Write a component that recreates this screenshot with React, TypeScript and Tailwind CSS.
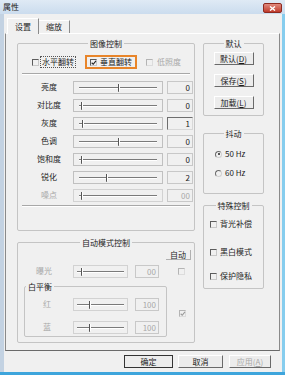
import type { ReactNode } from 'react'

const FONT = "font-['Noto_Sans_CJK_SC','Liberation_Sans',sans-serif]"

function Check({ checked, disabled }: { checked?: boolean; disabled?: boolean }) {
  return (
    <span
      className={`relative inline-block w-[7px] h-[7px] shrink-0 border-t border-l border-b border-r ${
        disabled
          ? 'border-t-[#b4b4b4] border-l-[#b4b4b4] border-b-[#dcdcdc] border-r-[#dcdcdc]'
          : 'border-t-[#5c5c5c] border-l-[#5c5c5c] border-b-[#c8c8c8] border-r-[#c8c8c8]'
      }`}
    >
      {checked && (
        <svg viewBox="0 0 7 7" className="absolute left-0 top-0 w-[6px] h-[6px]">
          <path d="M0.8 3.2 L2.6 5 L5.8 1" fill="none" stroke={disabled ? '#9a9a9a' : '#222'} strokeWidth="1.3" />
        </svg>
      )}
    </span>
  )
}

function Radio({ checked }: { checked?: boolean }) {
  return (
    <span className="relative inline-block w-[7px] h-[7px] shrink-0 rounded-full border border-t-[#6a6a6a] border-l-[#6a6a6a] border-b-[#d0d0d0] border-r-[#d0d0d0]">
      {checked && <span className="absolute left-[1.5px] top-[1.5px] w-[2px] h-[2px] rounded-full bg-[#222]" />}
    </span>
  )
}

// 滑块：凹陷框 + 中线 + 小游标
function Slider({ pos, wide, disabled }: { pos: number; wide?: boolean; disabled?: boolean }) {
  return (
    <div className={`relative h-[13px] shrink-0 border ${disabled ? 'border-[#d2d2d2]' : 'border-[#c0c0c0]'} ${wide ? 'w-[90px]' : 'w-[55px]'}`}>
      <div className={`absolute top-[5px] h-[2px] border-t border-[#7a7a7a] border-b border-b-white ${wide ? 'left-[5px] right-[5px]' : 'left-[3px] right-[3px]'}`} />
      <div className="absolute top-[2px] w-[2px] h-[7px] border-l border-[#555] border-r border-r-white" style={{ left: pos }} />
      <div className="absolute top-[9px] w-[1px] h-[1px] bg-[#777]" style={{ left: pos }} />
    </div>
  )
}

function Value({ v, narrow, disabled, focus }: { v: string; narrow?: boolean; disabled?: boolean; focus?: boolean }) {
  return (
    <div
      className={`h-[13px] shrink-0 border text-right pr-[2px] text-[8px] leading-[11px] ${
        focus ? 'border-t-[#6e6e6e] border-l-[#6e6e6e] border-b-[#d8d8d8] border-r-[#d8d8d8]' : 'border-[#c8c8c8]'
      } ${disabled ? 'text-[#a8a8a8]' : 'text-[#222]'} ${narrow ? 'w-[24px]' : 'w-[26px]'}`}
    >
      {v}
    </div>
  )
}

const ROWS = [
  { label: '亮度', pos: 44, v: '0' },
  { label: '对比度', pos: 7, v: '0' },
  { label: '灰度', pos: 8, v: '1', focus: true },
  { label: '色调', pos: 44, v: '0' },
  { label: '饱和度', pos: 7, v: '0' },
  { label: '锐化', pos: 32, v: '2' },
  { label: '噪点', pos: 7, v: '00', disabled: true },
]

// 分组框：标题压在上边框上
function Group({ title, className, children, left }: { title: string; className: string; children: ReactNode; left?: boolean }) {
  return (
    <div className={`relative shrink-0 border border-[#c4c4c4] rounded-[2px] ${className}`}>
      <span
        className={`absolute -top-[6px] px-[2px] bg-[#f0f0f0] text-[8px] leading-[11px] whitespace-nowrap text-[#222] ${
          left ? 'left-[1px]' : 'left-1/2 -translate-x-1/2'
        }`}
      >
        {title}
      </span>
      {children}
    </div>
  )
}

function Btn({ children, className, disabled, dflt }: { children: ReactNode; className: string; disabled?: boolean; dflt?: boolean }) {
  return (
    <div
      className={`shrink-0 flex items-center justify-center text-[8px] leading-none whitespace-nowrap bg-[#ececec] border ${
        dflt ? 'border-[#333]' : 'border-t-white border-l-white border-b-[#6a6a6a] border-r-[#6a6a6a]'
      } ${disabled ? 'text-[#a8a8a8]' : 'text-[#1a1a1a]'} ${className}`}
    >
      {children}
    </div>
  )
}

export default function App() {
  return (
    <div className={`w-[285px] h-[375px] flex flex-col bg-[#c8d8e9] ${FONT} text-[#1e1e1e] whitespace-nowrap`}>
      {/* 标题栏 */}
      <div className="h-[14px] shrink-0 flex items-center justify-between pl-[3px] pr-[3px] bg-gradient-to-b from-[#dfeaf5] to-[#cbdcee]">
        <span className="text-[8px] leading-none text-[#1a1a1a]">属性</span>
        <div className="w-[19px] h-[10px] mt-[2px] rounded-[2px] bg-gradient-to-b from-[#e08a7e] to-[#c0392b] border border-[#8e2a20] flex items-center justify-center">
          <svg viewBox="0 0 8 6" className="w-[7px] h-[5px]">
            <path d="M1 0.5 L7 5.5 M7 0.5 L1 5.5" stroke="#fff" strokeWidth="1.6" />
          </svg>
        </div>
      </div>

      <div className="h-[358px] shrink-0 flex">
        <div className="w-[4px] bg-[#c3d2e2]" />
        <div className="w-[278px] bg-[#f0f0f0] flex flex-col pl-[1px] pr-[2px]">
          {/* 选项卡 */}
          <div className="shrink-0 flex items-end h-[19px] pl-[2px]">
            <div className="h-[16px] w-[32px] flex items-center justify-center border-t border-l border-r border-t-white border-l-white border-r-[#8a8a8a] text-[8px] bg-[#f0f0f0] relative top-[1px]">设置</div>
            <div className="h-[13px] w-[31px] flex items-center justify-center border-t border-r border-t-white border-r-[#8a8a8a] text-[8px]">缩放</div>
          </div>

          {/* 面板 */}
          <div className="h-[318px] shrink-0 border border-t-white border-l-[#8a8a8a] border-r-[#8a8a8a] border-b-[#6a6a6a] flex pt-[9px] pl-[11px] pr-[14px]">
            {/* 左列 */}
            <div className="w-[178px] shrink-0 flex flex-col">
              <Group title="图像控制" className="h-[188px]">
                <div className="mt-[11px] h-[14px] flex items-center text-[8px]">
                  <span className="ml-[14px] flex"><Check /></span>
                  <span className="ml-[1px] px-[1px] leading-[10px] border border-dotted border-[#555]">水平翻转</span>
                  <div className="ml-[9px] h-[14px] w-[52px] border-2 border-[#e8852a] flex items-center">
                    <span className="ml-[3px] flex"><Check checked /></span>
                    <span className="ml-[3px]">垂直翻转</span>
                  </div>
                  <span className="ml-[9px] flex"><Check disabled /></span>
                  <span className="ml-[4px] text-[#a8a8a8]">低照度</span>
                </div>
                <div className="mt-[4px] mx-[4px] h-[2px] border-t border-[#a8a8a8] border-b border-b-white" />
                <div className="mt-[3px] flex flex-col">
                  {ROWS.map((r) => (
                    <div key={r.label} className="h-[18px] flex items-center text-[8px]">
                      <span className={`ml-[12px] w-[38px] text-center ${r.disabled ? 'text-[#a8a8a8]' : ''}`}>{r.label}</span>
                      <span className="ml-[5px]"><Slider wide pos={r.pos} disabled={r.disabled} /></span>
                      <span className="ml-[4px]"><Value v={r.v} disabled={r.disabled} focus={r.focus} /></span>
                    </div>
                  ))}
                </div>
                <div className="mt-[1px] mx-[4px] h-[2px] border-t border-[#a8a8a8] border-b border-b-white" />
              </Group>

              <Group title="自动模式控制" className="mt-[11px] h-[101px]">
                <div className="mt-[7px] h-[10px] flex justify-end pr-[3px]">
                  <div className="w-[25px] h-[10px] border-r border-b border-r-[#b0b0b0] border-b-[#b0b0b0] text-[8px] leading-[10px] text-center">自动</div>
                </div>
                <div className="mt-[4px] h-[14px] flex items-center text-[8px]">
                  <span className="ml-[12px] w-[28px] text-center text-[#a8a8a8]">曝光</span>
                  <span className="ml-[15px]"><Slider pos={7} disabled /></span>
                  <span className="ml-[7px]"><Value v="00" narrow disabled /></span>
                  <span className="ml-[19px] flex"><Check disabled /></span>
                </div>
                <div className="mt-[8px] flex">
                  <Group title="白平衡" left className="ml-[6px] w-[143px] h-[51px]">
                    <div className="mt-[10px] h-[14px] flex items-center text-[8px]">
                      <span className="ml-[12px] w-[20px] text-center text-[#a8a8a8]">红</span>
                      <span className="ml-[16px]"><Slider pos={15} disabled /></span>
                      <span className="ml-[7px]"><Value v="100" narrow disabled /></span>
                    </div>
                    <div className="mt-[9px] h-[14px] flex items-center text-[8px]">
                      <span className="ml-[12px] w-[20px] text-center text-[#a8a8a8]">蓝</span>
                      <span className="ml-[16px]"><Slider pos={15} disabled /></span>
                      <span className="ml-[7px]"><Value v="100" narrow disabled /></span>
                    </div>
                  </Group>
                  <div className="flex-1 flex items-center pl-[12px] pt-[4px]">
                    <Check checked disabled />
                  </div>
                </div>
              </Group>
            </div>

            {/* 右列 */}
            <div className="ml-[8px] w-[61px] shrink-0 flex flex-col">
              <Group title="默认" className="h-[73px]">
                <div className="flex flex-col items-center">
                  <Btn className="mt-[8px] w-[40px] h-[13px]">默认(<u>D</u>)</Btn>
                  <Btn className="mt-[9px] w-[40px] h-[13px]">保存(<u>S</u>)</Btn>
                  <Btn className="mt-[9px] w-[40px] h-[13px]">加载(<u>L</u>)</Btn>
                </div>
              </Group>
              <Group title="抖动" className="mt-[17px] h-[61px]">
                <div className="mt-[15px] h-[10px] flex items-center text-[8px]">
                  <span className="ml-[11px] flex"><Radio checked /></span>
                  <span className="ml-[3px]">50 Hz</span>
                </div>
                <div className="mt-[9px] h-[10px] flex items-center text-[8px]">
                  <span className="ml-[11px] flex"><Radio /></span>
                  <span className="ml-[3px]">60 Hz</span>
                </div>
              </Group>
              <Group title="特殊控制" className="mt-[11px] h-[84px]">
                {[
                  { t: '背光补偿', mt: 'mt-[13px]' },
                  { t: '黑白模式', mt: 'mt-[18px]' },
                  { t: '保护隐私', mt: 'mt-[14px]' },
                ].map((c) => (
                  <div key={c.t} className={`${c.mt} h-[10px] flex items-center text-[8px]`}>
                    <span className="ml-[6px] flex"><Check /></span>
                    <span className="ml-[3px]">{c.t}</span>
                  </div>
                ))}
              </Group>
            </div>
          </div>

          {/* 底部按钮 */}
          <div className="mt-[4px] shrink-0 flex justify-end pr-[9px]">
            <Btn dflt className="w-[49px] h-[13px]">确定</Btn>
            <Btn className="ml-[5px] w-[45px] h-[13px]">取消</Btn>
            <Btn disabled className="ml-[6px] w-[42px] h-[13px]">应用(<u>A</u>)</Btn>
          </div>
        </div>
        <div className="w-[3px] bg-[#86cdee]" />
      </div>
      <div className="h-[3px] shrink-0 bg-[#3ea5dc]" />
    </div>
  )
}
